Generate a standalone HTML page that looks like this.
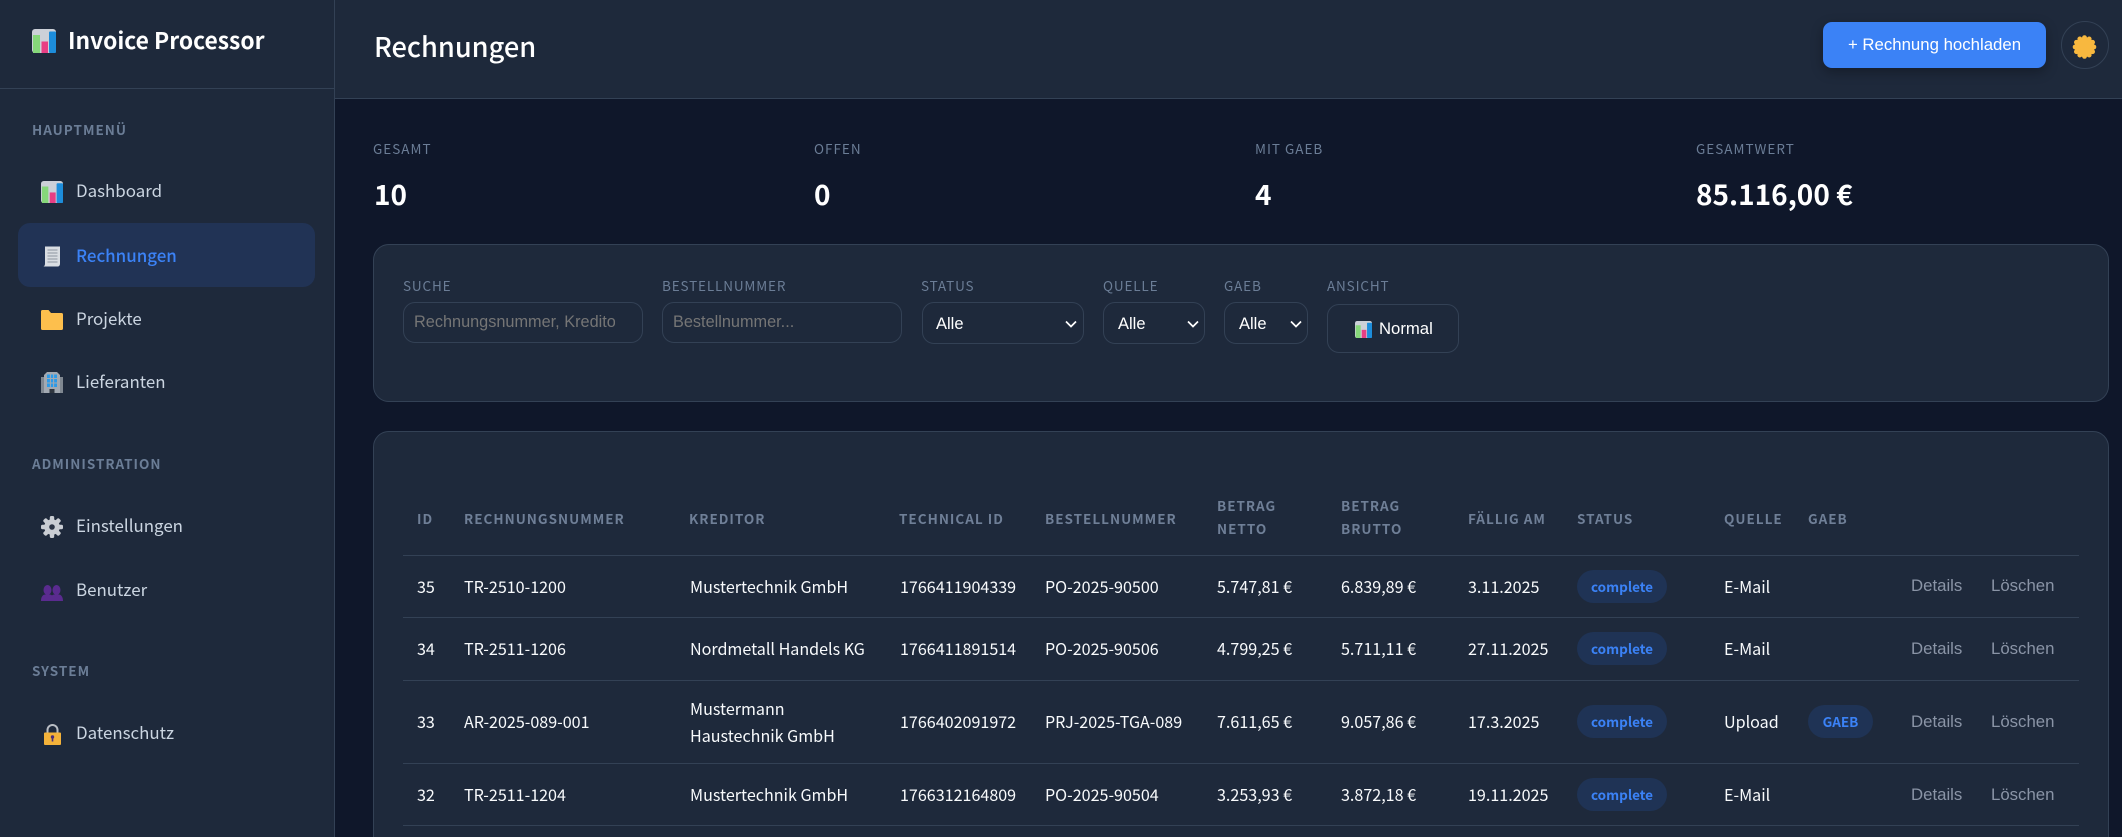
<!DOCTYPE html>
<html lang="de">
<head>
<meta charset="utf-8">
<title>Invoice Processor</title>
<style>
*{box-sizing:border-box;margin:0;padding:0}
html,body{width:2122px;height:837px;overflow:hidden;background:#0f172a}
body{position:relative;font-family:"Noto Sans CJK SC","Liberation Sans",sans-serif;color:#fff}
.box{position:absolute}
.t{position:absolute;white-space:nowrap;line-height:30px;height:30px}
.a{font-family:"Liberation Sans",Arial,sans-serif}
svg{position:absolute;display:block}
.nav{font-size:16.9px;color:#cbd5e1;left:76px;margin-top:-1px}
.sec{font-size:13.5px;font-weight:700;letter-spacing:1px;color:#6b7d96;left:32px;margin-top:-1px}
.sl{font-size:13.5px;letter-spacing:1px;color:#6b7d96;margin-top:-1px}
.sv{font-size:28px;font-weight:700;color:#fff}
.fl{font-size:13.5px;letter-spacing:.85px;color:#6b7d96;margin-top:-1px}
.fld{position:absolute;border:1px solid #334155;border-radius:12px;background:transparent}
input.fld{color:#fff;font:16.3px "Liberation Sans",Arial,sans-serif;padding:0 27px 0 10px;outline:none}
input.fld::placeholder{color:#757575;opacity:1}
.th{font-size:13.5px;font-weight:700;letter-spacing:1px;color:#6f7f97}
.td{font-size:16.1px;color:#f8fafc;margin-top:-1px}
.ac{font-size:16.8px;font-family:"Liberation Sans",Arial,sans-serif;color:#8a94a6;margin-top:1px}
.ln{position:absolute;left:403px;width:1676px;height:1px;background:#334155}
.pill{position:absolute;height:33px;border-radius:17px;background:#1f3355;color:#3b82f6;font-size:13.5px;font-weight:700;text-align:center;line-height:32px}
</style>
</head>
<body>
<svg width="0" height="0" style="position:absolute">
<defs>
<symbol id="chart" viewBox="0 0 24 24">
<rect x="0" y="0" width="24" height="24" rx="3" fill="#ccd0d8"/>
<rect x="1" y="6" width="7" height="18" fill="#86d77a"/>
<rect x="9.500" y="12.500" width="6.500" height="11.500" fill="#e83e84"/>
<rect x="17" y="2.500" width="7" height="21.500" rx="1" fill="#1d8ddb"/>
</symbol>
</defs>
</svg>

<!-- Sidebar -->
<div class="box" style="left:0;top:0;width:335px;height:837px;background:#1e293b;border-right:1px solid #334155"></div>
<div class="box" style="left:0;top:88px;width:334px;height:1px;background:#334155"></div>
<svg style="left:32px;top:29px" width="24" height="24"><use href="#chart"/></svg>
<span class="t" style="left:68px;top:25px;font-size:22.8px;font-weight:700;color:#fff">Invoice Processor</span>

<span class="t sec" style="top:115px">HAUPTMENÜ</span>
<div class="box" style="left:18px;top:223px;width:297px;height:64px;border-radius:12px;background:#213355"></div>

<svg style="left:41px;top:181px" width="22" height="22"><use href="#chart"/></svg>
<span class="t nav" style="top:176px">Dashboard</span>

<svg style="left:43px;top:246px" width="18" height="21" viewBox="0 0 18 21"><path d="M2 0.500h15v17c0 2-1 3-2.500 3H0.500c1.200-.6 1.500-1.600 1.500-3z" fill="#d9dde2"/><path d="M4.500 3.500h10v1h-10zM4.500 6.500h10v1h-10zM4.500 9.500h10v1h-10zM4.500 12.500h10v1h-10zM4.500 15.500h10v1h-10z" fill="#8d95a0"/></svg>
<span class="t nav" style="top:241px;color:#3b82f6;font-weight:500">Rechnungen</span>

<svg style="left:41px;top:310px" width="22" height="20" viewBox="0 0 22 20"><path d="M0 1.500C0 .6.600 0 1.500 0h6l2.500 3h10.500c.9 0 1.500.6 1.500 1.500V18.500c0 .9-.6 1.500-1.500 1.500h-19C.6 20 0 19.400 0 18.500z" fill="#fdbf4d"/></svg>
<span class="t nav" style="top:304px">Projekte</span>

<svg style="left:41px;top:372px" width="22" height="21" viewBox="0 0 22 21"><path d="M3 3l3-3h10l3 3v18H3z" fill="#a2a9b2"/><rect x="0" y="5" width="3" height="16" fill="#7f8791"/><rect x="19" y="5" width="3" height="16" fill="#7f8791"/><path d="M6 2.500h10v3.500H6zM6 7h10v3.500H6zM6 11.500h10v3.500H6z" fill="#2c9ae8"/><path d="M8.900 2h1v13.500h-1zM12.100 2h1v13.500h-1z" fill="#a2a9b2"/><rect x="8.500" y="17" width="5" height="4" fill="#2f3640"/></svg>
<span class="t nav" style="top:367px">Lieferanten</span>

<span class="t sec" style="top:449px">ADMINISTRATION</span>

<svg style="left:41px;top:516px" width="22" height="22" viewBox="0 0 22 22"><g fill="#c9cdd3"><circle cx="11" cy="11" r="7.800"/><rect x="8.800" y="0" width="4.400" height="22" rx="1.500"/><rect x="8.800" y="0" width="4.400" height="22" rx="1.500" transform="rotate(45 11 11)"/><rect x="8.800" y="0" width="4.400" height="22" rx="1.500" transform="rotate(90 11 11)"/><rect x="8.800" y="0" width="4.400" height="22" rx="1.500" transform="rotate(135 11 11)"/></g><circle cx="11" cy="11" r="2.800" fill="#2a3344"/></svg>
<span class="t nav" style="top:511px">Einstellungen</span>

<svg style="left:41px;top:585px" width="22" height="16" viewBox="0 0 22 16"><g fill="#5a2b8f"><ellipse cx="6.500" cy="5" rx="4" ry="5"/><ellipse cx="15.500" cy="5" rx="4" ry="5"/><path d="M0 16c0-3 1-6 4-6.500h5c1.500.3 2 1 2 1s.5-.7 2-1h5c3 .5 4 3.500 4 6.500z"/></g></svg>
<span class="t nav" style="top:575px">Benutzer</span>

<span class="t sec" style="top:656px">SYSTEM</span>

<svg style="left:44px;top:724px" width="17" height="21" viewBox="0 0 17 21"><path d="M3.500 10V6a5 5 0 0 1 10 0v4" fill="none" stroke="#b9bdc4" stroke-width="2"/><rect x="0" y="8.500" width="17" height="12.500" rx="1" fill="#f4b23a"/><circle cx="8.500" cy="13" r="1.700" fill="#4a2d7a"/><rect x="7.700" y="13" width="1.600" height="4.500" fill="#4a2d7a"/></svg>
<span class="t nav" style="top:718px">Datenschutz</span>

<!-- Top bar -->
<div class="box" style="left:335px;top:0;width:1787px;height:99px;background:#1e293b;border-bottom:1px solid #334155"></div>
<span class="t" style="left:374px;top:30px;font-size:27.2px;font-weight:500;color:#fff">Rechnungen</span>
<div class="box a" style="left:1823px;top:22px;width:223px;height:46px;border-radius:9px;background:#3b82f6;box-shadow:0 4px 12px rgba(0,0,0,.3);color:#fff;font-size:16.800px;line-height:45px;text-align:center">+ Rechnung hochladen</div>
<div class="box" style="left:2061px;top:21px;width:48px;height:48px;border-radius:50%;border:1px solid #334155"></div>
<svg style="left:2072px;top:35px" width="25" height="24" viewBox="0 0 24 24"><g fill="#f8b83f"><circle cx="12" cy="12" r="10"/><circle cx="12" cy="2.600" r="2.400"/><circle cx="16.700" cy="3.900" r="2.400"/><circle cx="20.100" cy="7.300" r="2.400"/><circle cx="21.400" cy="12" r="2.400"/><circle cx="20.100" cy="16.700" r="2.400"/><circle cx="16.700" cy="20.100" r="2.400"/><circle cx="12" cy="21.400" r="2.400"/><circle cx="7.300" cy="20.100" r="2.400"/><circle cx="3.900" cy="16.700" r="2.400"/><circle cx="2.600" cy="12" r="2.400"/><circle cx="3.900" cy="7.300" r="2.400"/><circle cx="7.300" cy="3.900" r="2.400"/></g></svg>

<!-- Stats -->
<span class="t sl" style="left:373px;top:134px">GESAMT</span>
<span class="t sl" style="left:814px;top:134px">OFFEN</span>
<span class="t sl" style="left:1255px;top:134px">MIT GAEB</span>
<span class="t sl" style="left:1696px;top:134px">GESAMTWERT</span>
<span class="t sv" style="left:374px;top:179px">10</span>
<span class="t sv" style="left:814px;top:179px">0</span>
<span class="t sv" style="left:1255px;top:179px">4</span>
<span class="t sv" style="left:1696px;top:179px">85.116,00 €</span>

<!-- Filter card -->
<div class="box" style="left:373px;top:244px;width:1736px;height:158px;background:#1e293b;border:1px solid #334155;border-radius:16px"></div>
<span class="t fl" style="left:403px;top:271px">SUCHE</span>
<span class="t fl" style="left:662px;top:271px">BESTELLNUMMER</span>
<span class="t fl" style="left:921px;top:271px">STATUS</span>
<span class="t fl" style="left:1103px;top:271px">QUELLE</span>
<span class="t fl" style="left:1224px;top:271px">GAEB</span>
<span class="t fl" style="left:1327px;top:271px">ANSICHT</span>

<input class="fld" style="left:403px;top:302px;width:240px;height:41px" placeholder="Rechnungsnummer, Kreditor...">
<input class="fld" style="left:662px;top:302px;width:240px;height:41px" placeholder="Bestellnummer...">

<div class="fld" style="left:922px;top:302px;width:162px;height:42px"></div>
<span class="t a" style="left:936px;top:309px;font-size:16.500px">Alle</span>
<svg style="left:1065px;top:320px" width="12" height="8" viewBox="0 0 12 8"><path d="M1 1.500l5 5 5-5" fill="none" stroke="#fff" stroke-width="1.700"/></svg>

<div class="fld" style="left:1103px;top:302px;width:102px;height:42px"></div>
<span class="t a" style="left:1118px;top:309px;font-size:16.500px">Alle</span>
<svg style="left:1187px;top:320px" width="12" height="8" viewBox="0 0 12 8"><path d="M1 1.500l5 5 5-5" fill="none" stroke="#fff" stroke-width="1.700"/></svg>

<div class="fld" style="left:1224px;top:302px;width:84px;height:42px"></div>
<span class="t a" style="left:1239px;top:309px;font-size:16.500px">Alle</span>
<svg style="left:1290px;top:320px" width="12" height="8" viewBox="0 0 12 8"><path d="M1 1.500l5 5 5-5" fill="none" stroke="#fff" stroke-width="1.700"/></svg>

<div class="fld" style="left:1327px;top:304px;width:132px;height:49px"></div>
<svg style="left:1355px;top:321px" width="17" height="17"><use href="#chart"/></svg>
<span class="t a" style="left:1379px;top:314px;font-size:16.700px">Normal</span>

<!-- Table card -->
<div class="box" style="left:373px;top:431px;width:1736px;height:440px;background:#1e293b;border:1px solid #334155;border-radius:16px"></div>

<span class="t th" style="left:417px;top:503px">ID</span>
<span class="t th" style="left:464px;top:503px">RECHNUNGSNUMMER</span>
<span class="t th" style="left:689px;top:503px">KREDITOR</span>
<span class="t th" style="left:899px;top:503px">TECHNICAL ID</span>
<span class="t th" style="left:1045px;top:503px">BESTELLNUMMER</span>
<span class="t th" style="left:1217px;top:490px">BETRAG</span>
<span class="t th" style="left:1217px;top:513px">NETTO</span>
<span class="t th" style="left:1341px;top:490px">BETRAG</span>
<span class="t th" style="left:1341px;top:513px">BRUTTO</span>
<span class="t th" style="left:1468px;top:503px">FÄLLIG AM</span>
<span class="t th" style="left:1577px;top:503px">STATUS</span>
<span class="t th" style="left:1724px;top:503px">QUELLE</span>
<span class="t th" style="left:1808px;top:503px">GAEB</span>

<div class="ln" style="top:555px"></div>
<div class="ln" style="top:617px"></div>
<div class="ln" style="top:680px"></div>
<div class="ln" style="top:763px"></div>
<div class="ln" style="top:825px"></div>

<!-- Row 35 -->
<span class="t td" style="left:417px;top:572px">35</span>
<span class="t td" style="left:464px;top:572px">TR-2510-1200</span>
<span class="t td" style="left:690px;top:572px">Mustertechnik GmbH</span>
<span class="t td" style="left:900px;top:572px">1766411904339</span>
<span class="t td" style="left:1045px;top:572px">PO-2025-90500</span>
<span class="t td" style="left:1217px;top:572px">5.747,81 €</span>
<span class="t td" style="left:1341px;top:572px">6.839,89 €</span>
<span class="t td" style="left:1468px;top:572px">3.11.2025</span>
<div class="pill" style="left:1577px;top:570px;width:90px">complete</div>
<span class="t td" style="left:1724px;top:572px">E-Mail</span>
<span class="t ac" style="left:1911px;top:570px">Details</span>
<span class="t ac" style="left:1991px;top:570px">Löschen</span>

<!-- Row 34 -->
<span class="t td" style="left:417px;top:634px">34</span>
<span class="t td" style="left:464px;top:634px">TR-2511-1206</span>
<span class="t td" style="left:690px;top:634px">Nordmetall Handels KG</span>
<span class="t td" style="left:900px;top:634px">1766411891514</span>
<span class="t td" style="left:1045px;top:634px">PO-2025-90506</span>
<span class="t td" style="left:1217px;top:634px">4.799,25 €</span>
<span class="t td" style="left:1341px;top:634px">5.711,11 €</span>
<span class="t td" style="left:1468px;top:634px">27.11.2025</span>
<div class="pill" style="left:1577px;top:632px;width:90px">complete</div>
<span class="t td" style="left:1724px;top:634px">E-Mail</span>
<span class="t ac" style="left:1911px;top:633px">Details</span>
<span class="t ac" style="left:1991px;top:633px">Löschen</span>

<!-- Row 33 -->
<span class="t td" style="left:417px;top:707px">33</span>
<span class="t td" style="left:464px;top:707px">AR-2025-089-001</span>
<span class="t td" style="left:690px;top:694px">Mustermann</span>
<span class="t td" style="left:690px;top:721px">Haustechnik GmbH</span>
<span class="t td" style="left:900px;top:707px">1766402091972</span>
<span class="t td" style="left:1045px;top:707px">PRJ-2025-TGA-089</span>
<span class="t td" style="left:1217px;top:707px">7.611,65 €</span>
<span class="t td" style="left:1341px;top:707px">9.057,86 €</span>
<span class="t td" style="left:1468px;top:707px">17.3.2025</span>
<div class="pill" style="left:1577px;top:705px;width:90px">complete</div>
<span class="t td" style="left:1724px;top:707px">Upload</span>
<div class="pill" style="left:1808px;top:705px;width:65px">GAEB</div>
<span class="t ac" style="left:1911px;top:706px">Details</span>
<span class="t ac" style="left:1991px;top:706px">Löschen</span>

<!-- Row 32 -->
<span class="t td" style="left:417px;top:780px">32</span>
<span class="t td" style="left:464px;top:780px">TR-2511-1204</span>
<span class="t td" style="left:690px;top:780px">Mustertechnik GmbH</span>
<span class="t td" style="left:900px;top:780px">1766312164809</span>
<span class="t td" style="left:1045px;top:780px">PO-2025-90504</span>
<span class="t td" style="left:1217px;top:780px">3.253,93 €</span>
<span class="t td" style="left:1341px;top:780px">3.872,18 €</span>
<span class="t td" style="left:1468px;top:780px">19.11.2025</span>
<div class="pill" style="left:1577px;top:778px;width:90px">complete</div>
<span class="t td" style="left:1724px;top:780px">E-Mail</span>
<span class="t ac" style="left:1911px;top:779px">Details</span>
<span class="t ac" style="left:1991px;top:779px">Löschen</span>
</body>
</html>
